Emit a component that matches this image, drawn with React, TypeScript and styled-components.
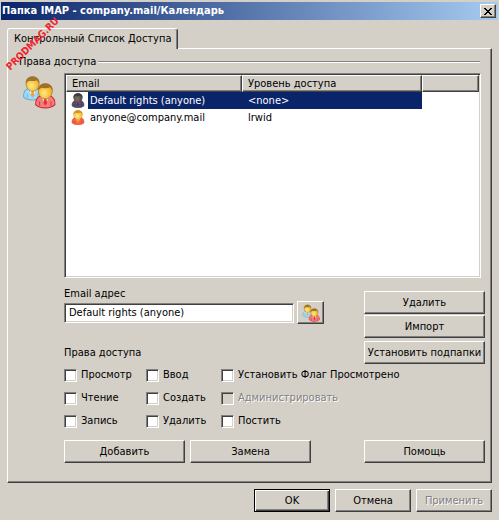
import React, { useId, useState } from 'react';
import styled, { createGlobalStyle, css } from 'styled-components';

const Global = createGlobalStyle`
  * { box-sizing: border-box; }
  body {
    margin: 0;
    background: #d4d0c8;
    color: #000;
    font: 11px/14px Tahoma, "DejaVu Sans Condensed", "DejaVu Sans", sans-serif;
  }
  button, input { font: inherit; color: inherit; }
`;

const raised = css`
  border: 1px solid;
  border-color: #fff #404040 #404040 #fff;
  box-shadow: inset -1px -1px 0 #808080;
`;

const sunken = css`
  border: 1px solid;
  border-color: #808080 #fff #fff #808080;
  box-shadow: inset 1px 1px 0 #404040, inset -1px -1px 0 #d4d0c8;
`;

const Dialog = styled.form`
  position: relative;
  padding: 2px 1px 8px;
`;

const TitleBar = styled.header`
  display: flex;
  align-items: center;
  justify-content: space-between;
  height: 18px;
  padding: 0 2px 0 1px;
  background: linear-gradient(to right, #0a246a, #a6caf0);
`;

const Title = styled.h1`
  margin: 0;
  color: #fff;
  font-size: 11px;
  line-height: 18px;
  font-weight: bold;
  white-space: nowrap;
`;

const CloseButton = styled.button`
  ${raised}
  display: flex;
  align-items: center;
  justify-content: center;
  width: 16px;
  height: 14px;
  padding: 0;
  background: #d4d0c8;
`;

const Tabs = styled.nav`
  display: flex;
  margin: 8px 6px 0;
`;

const Tab = styled.button`
  position: relative;
  height: 21px;
  padding: 0 6px;
  margin-bottom: -1px;
  background: #d4d0c8;
  border: 1px solid;
  border-color: #fff #404040 transparent #fff;
  border-bottom: 0;
  border-radius: 3px 3px 0 0;
  box-shadow: inset -1px 0 0 #808080;
  white-space: nowrap;
`;

const Panel = styled.section`
  ${raised}
  margin: 0 6px;
  padding: 5px 6px 19px 0;
`;

const GroupTitle = styled.h2`
  display: flex;
  align-items: center;
  gap: 2px;
  margin: 0 5px 3px 5px;
  font-size: 11px;
  line-height: 16px;
  font-weight: normal;

  &::before, &::after {
    content: '';
    width: 4px;
    height: 2px;
    background: linear-gradient(#808080 50%, #fff 50%);
  }
  &::after { flex: 1; }
`;

const Body = styled.div`
  display: grid;
  grid-template-columns: 56px minmax(0, 1fr);
`;

const IconCell = styled.div`
  padding: 2px 0 0 14px;
`;

const ListBox = styled.div`
  ${sunken}
  height: 205px;
  margin-right: 4px;
  padding: 1px;
  background: #fff;
`;

const List = styled.table`
  width: 100%;
  table-layout: fixed;
  border-collapse: separate;
  border-spacing: 0;
`;

const Column = styled.col<{ $width?: number }>`
  width: ${p => (p.$width ? `${p.$width}px` : 'auto')};
`;

const HeadCell = styled.th`
  ${raised}
  height: 17px;
  padding: 0 5px;
  background: #d4d0c8;
  font-weight: normal;
  line-height: 14px;
  text-align: left;
`;

const Row = styled.tr<{ $selected?: boolean }>`
  height: 17px;
  ${p => p.$selected && css`
    td:nth-child(2), td:nth-child(3) { background: #0a246a; color: #fff; }
  `}
`;

const Cell = styled.td`
  padding: 0 0 0 2px;
  white-space: nowrap;
`;

const LevelCell = styled(Cell)`
  padding-left: 6px;
`;

const PersonCell = styled(Cell)`
  padding-left: 5px;
  line-height: 0;
`;

const Middle = styled.div`
  display: flex;
  gap: 40px;
  margin-top: 9px;
`;

const Fields = styled.div`
  flex: 1;
  min-width: 0;
`;

const FieldLabel = styled.label`
  display: block;
`;

const FieldRow = styled.div`
  display: flex;
  align-items: center;
  gap: 3px;
  margin-bottom: 22px;
`;

const TextField = styled.input`
  ${sunken}
  flex: 1;
  min-width: 0;
  height: 20px;
  padding: 0 4px;
  background: #fff;
  border-radius: 0;
  outline: 0;
`;

const Button = styled.button<{ $default?: boolean }>`
  ${raised}
  height: 23px;
  padding: 0 2px;
  background: #d4d0c8;
  white-space: nowrap;
  ${p => p.$default && css`
    border-color: #000;
    box-shadow: inset 1px 1px 0 #fff, inset -1px -1px 0 #404040, inset -2px -2px 0 #808080;
  `}
  &:disabled { color: #808080; text-shadow: 1px 1px 0 #fff; }
`;

const PickButton = styled(Button)`
  display: flex;
  align-items: center;
  justify-content: center;
  width: 27px;
`;

const SideButtons = styled.div`
  display: flex;
  flex-direction: column;
  width: 121px;
  padding-top: 4px;
  gap: 1px;

  ${Button}:last-child { margin-top: 2px; }
`;

const Rights = styled.fieldset`
  display: grid;
  grid-template-columns: 82px 75px minmax(0, 1fr);
  row-gap: 7px;
  margin: 3px 0 11px;
  padding: 0;
  border: 0;
`;

const CheckLabel = styled.label<{ $disabled?: boolean }>`
  display: flex;
  align-items: center;
  gap: 4px;
  height: 16px;
  white-space: nowrap;
  ${p => p.$disabled && css`color: #808080; text-shadow: 1px 1px 0 #fff;`}
`;

const CheckBox = styled.input`
  ${sunken}
  appearance: none;
  flex: none;
  width: 13px;
  height: 13px;
  margin: 0;
  background: #fff;
  &:checked {
    background: linear-gradient(#000, #000) center / 5px 5px no-repeat #fff;
  }
  &:disabled { background: #d4d0c8; }
`;

const Actions = styled.div`
  display: grid;
  grid-template-columns: 121px 121px minmax(121px, 1fr);
  column-gap: 5px;

  ${Button}:last-child { justify-self: end; width: 121px; }
`;

const Footer = styled.footer`
  display: flex;
  justify-content: flex-end;
  gap: 5px;
  margin: 6px 6px 0;

  ${Button} { width: 76px; }
`;

const Watermark = styled.div`
  position: absolute;
  left: -2px;
  top: 37px;
  color: #f0242c;
  font: bold 10px/14px "DejaVu Sans Condensed", "DejaVu Sans", sans-serif;
  white-space: nowrap;
  transform: rotate(-45deg);
  pointer-events: none;
`;

type Tone = { hair: string; face: string; glow: string; shirt: string; edge: string; shine: string; tie: string };

const blue: Tone = { hair: '#9c7430', face: '#f2b01e', glow: '#ffe98a', shirt: '#a3daf8', edge: '#62add8', shine: '#eefaff', tie: '#f0a03c' };
const red: Tone = { hair: '#a07026', face: '#f2ac14', glow: '#ffe884', shirt: '#f47f7a', edge: '#d4242c', shine: '#ffe6dc', tie: '#e83038' };
const gold: Tone = { hair: '#d8941c', face: '#f6b422', glow: '#ffec90', shirt: '#f46048', edge: '#dc4428', shine: '#ffe6a8', tie: '#f09030' };
const dark: Tone = { hair: '#403a3c', face: '#554a44', glow: '#7b7068', shirt: '#5b4a6c', edge: '#3e3250', shine: '#84748e', tie: '#4a3c5c' };

function Figure({ tone }: { tone: Tone }) {
  const id = useId();
  return (
    <>
      <defs>
        <radialGradient id={id} cx=".42" cy=".62" r=".6">
          <stop offset="0" stopColor={tone.glow} />
          <stop offset="1" stopColor={tone.face} />
        </radialGradient>
      </defs>
      <path d="M.6 20c-.2-4 1.400-7 5.400-8.500h8c4 1.500 5.600 4.500 5.400 8.500-2 2-5.400 3-9.400 3s-7.400-1-9.400-3z" fill={tone.shirt} stroke={tone.edge} strokeWidth="1" />
      <path d="M6 11.500h8l-2 5-2 3-2-3z" fill={tone.shine} />
      <path d="M9 14.500h2l.8 4L10 21l-1.800-2.500z" fill={tone.tie} />
      <path d="M4.500 17v4M15.500 17v4" stroke={tone.edge} strokeWidth=".8" />
      <path d="M3.200 6.800C3.200 3 6.200.7 10 .7s6.800 2.300 6.800 6.100c0 4.700-3 7.900-6.800 7.900s-6.800-3.200-6.800-7.900z" fill={`url(#${id})`} stroke={tone.hair} strokeWidth=".7" />
      <path d="M3.200 7C2.700 2.800 5.800.4 10 .4S17.300 2.800 16.800 7c-.7-1.300-1.700-2-2.300-3C12 5 8 5.200 6.200 4.500 5.200 5.200 4 6 3.200 7z" fill={tone.hair} />
    </>
  );
}

function Person({ tone }: { tone: Tone }) {
  return (
    <svg width="14" height="15" viewBox="0 0 20 23.500" aria-hidden="true">
      <Figure tone={tone} />
    </svg>
  );
}

function People({ size }: { size: number }) {
  return (
    <svg width={size} height={size} viewBox="0 0 34 34" aria-hidden="true">
      <g transform="translate(1 1) scale(.96 1.040)"><Figure tone={blue} /></g>
      <g transform="translate(13 8) scale(1.030 1.080)"><Figure tone={red} /></g>
    </svg>
  );
}

const entries = [
  { email: 'Default rights (anyone)', level: '<none>', tone: dark },
  { email: 'anyone@company.mail', level: 'lrwid', tone: gold },
];

const rights = [
  { name: 'Просмотр' },
  { name: 'Ввод' },
  { name: 'Установить Флаг Просмотрено' },
  { name: 'Чтение' },
  { name: 'Создать' },
  { name: 'Администрировать', disabled: true },
  { name: 'Запись' },
  { name: 'Удалить' },
  { name: 'Постить' },
];

export default function App() {
  const [selected, setSelected] = useState(0);
  const [email, setEmail] = useState(entries[0].email);

  const select = (index: number) => {
    setSelected(index);
    setEmail(entries[index].email);
  };

  return (
    <>
      <Global />
      <Dialog onSubmit={e => e.preventDefault()}>
        <TitleBar>
          <Title>Папка IMAP - company.mail/Календарь</Title>
          <CloseButton type="button" aria-label="Закрыть">
            <svg width="8" height="7" viewBox="0 0 8 7" shapeRendering="crispEdges" aria-hidden="true">
              <path d="M0 0h2v1h1v1h2V1h1V0h2v1H7v1H6v1H5v1h1v1h1v1h1v1H6V6H5V5H3v1H2v1H0V6h1V5h1V4h1V3H2V2H1V1H0z" />
            </svg>
          </CloseButton>
        </TitleBar>
        <Tabs>
          <Tab type="button">Контрольный Список Доступа</Tab>
        </Tabs>
        <Panel>
          <GroupTitle>Права доступа</GroupTitle>
          <Body>
            <IconCell><People size={34} /></IconCell>
            <div>
              <ListBox>
                <List>
                  <colgroup>
                    <Column $width={22} />
                    <Column $width={154} />
                    <Column $width={180} />
                    <Column />
                  </colgroup>
                  <thead>
                    <tr>
                      <HeadCell colSpan={2}>Email</HeadCell>
                      <HeadCell>Уровень доступа</HeadCell>
                      <HeadCell />
                    </tr>
                  </thead>
                  <tbody>
                    {entries.map((entry, i) => (
                      <Row key={entry.email} $selected={i === selected} onClick={() => select(i)}>
                        <PersonCell><Person tone={entry.tone} /></PersonCell>
                        <Cell>{entry.email}</Cell>
                        <LevelCell>{entry.level}</LevelCell>
                        <Cell />
                      </Row>
                    ))}
                  </tbody>
                </List>
              </ListBox>
              <Middle>
                <Fields>
                  <FieldLabel htmlFor="email">Email адрес</FieldLabel>
                  <FieldRow>
                    <TextField id="email" value={email} onChange={e => setEmail(e.target.value)} />
                    <PickButton type="button" aria-label="Email"><People size={18} /></PickButton>
                  </FieldRow>
                  <div id="rights">Права доступа</div>
                </Fields>
                <SideButtons>
                  <Button type="button">Удалить</Button>
                  <Button type="button">Импорт</Button>
                  <Button type="button">Установить подпапки</Button>
                </SideButtons>
              </Middle>
              <Rights aria-labelledby="rights">
                {rights.map(right => (
                  <CheckLabel key={right.name} $disabled={right.disabled}>
                    <CheckBox type="checkbox" disabled={right.disabled} />
                    {right.name}
                  </CheckLabel>
                ))}
              </Rights>
              <Actions>
                <Button type="button">Добавить</Button>
                <Button type="button">Замена</Button>
                <Button type="button">Помощь</Button>
              </Actions>
            </div>
          </Body>
        </Panel>
        <Footer>
          <Button type="submit" $default>OK</Button>
          <Button type="button">Отмена</Button>
          <Button type="button" disabled>Применить</Button>
        </Footer>
        <Watermark>PRODMAG.RU</Watermark>
      </Dialog>
    </>
  );
}
